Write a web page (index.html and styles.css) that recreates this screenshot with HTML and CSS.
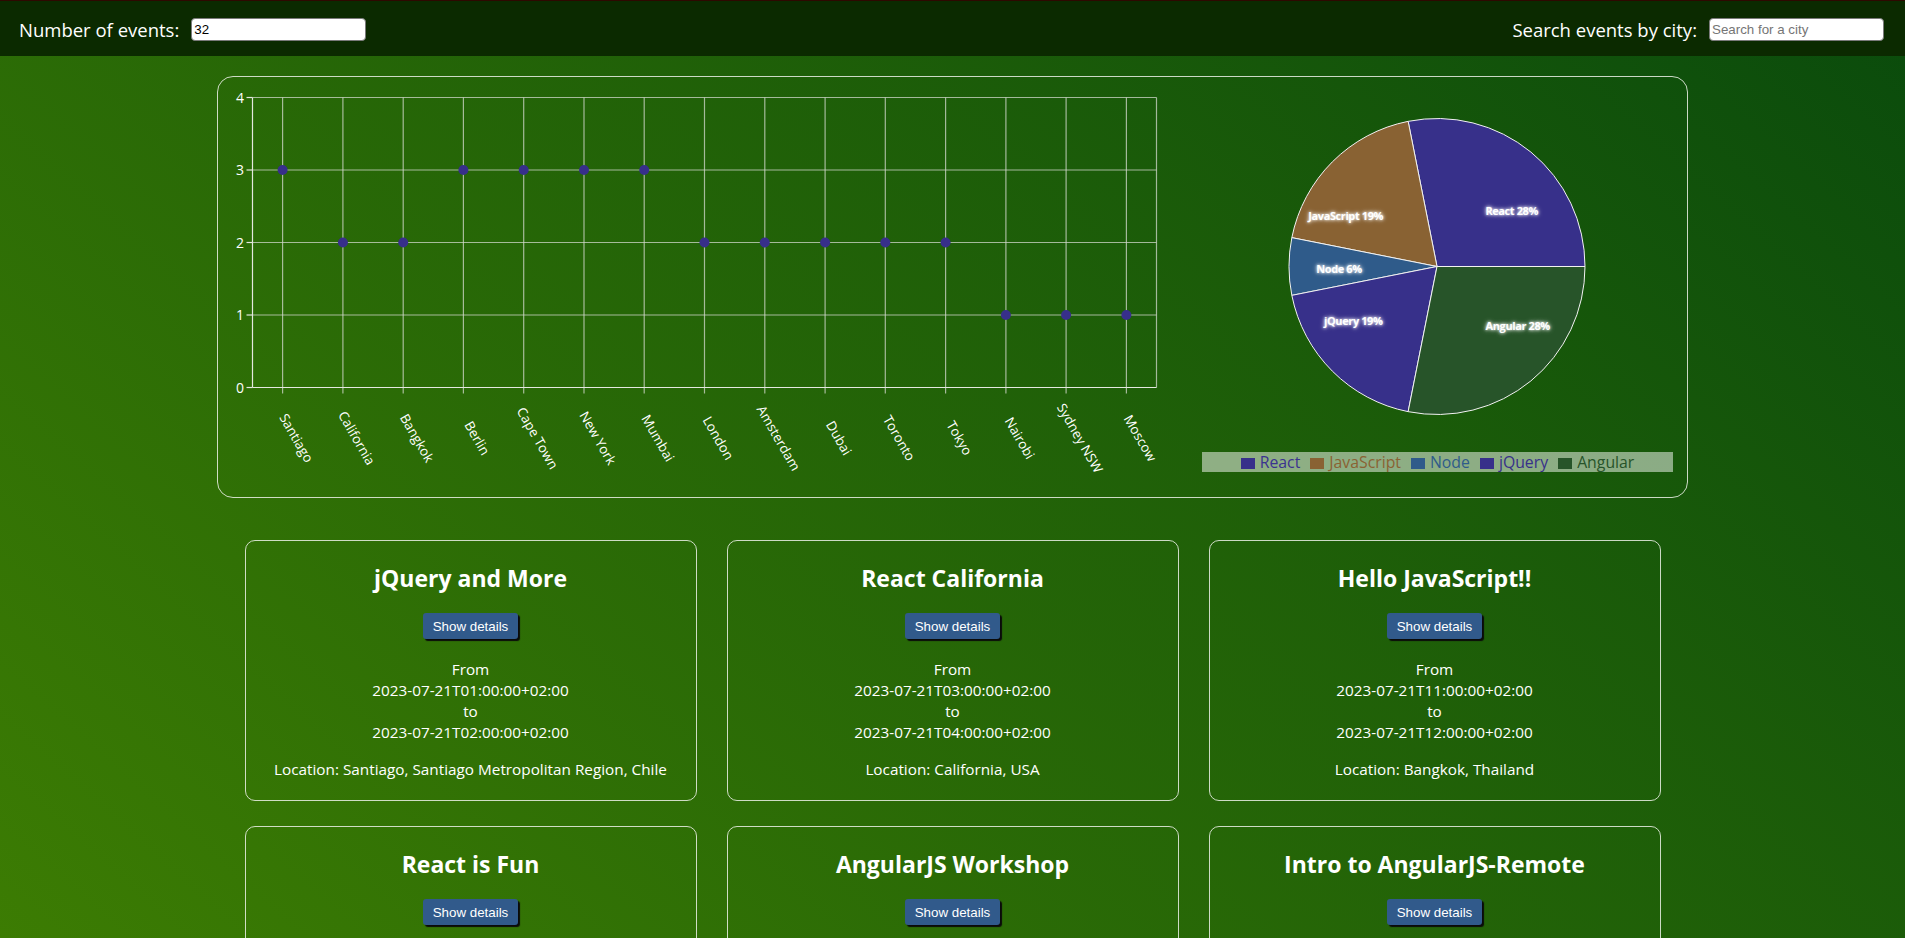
FILE: index.html
```html
<!DOCTYPE html>
<html lang="en">
<head>
<meta charset="utf-8">
<title>Meet App</title>
<link rel="stylesheet" href="styles.css">
</head>
<body>
<header class="topbar">
  <div class="field">
    <label class="field-label" for="num-events">Number of events:</label>
    <input id="num-events" class="text-input" type="text" value="32">
  </div>
  <div class="field">
    <label class="field-label" for="city-search">Search events by city:</label>
    <input id="city-search" class="text-input" type="text" placeholder="Search for a city">
  </div>
</header>

<main class="content">
  <section class="charts">
    <svg class="scatter" width="970" height="420" viewBox="0 0 970 420">
      <g class="grid">
        <line x1="34.5" y1="20.5" x2="938.5" y2="20.5"/>
        <line x1="34.5" y1="93" x2="938.5" y2="93"/>
        <line x1="34.5" y1="165.5" x2="938.5" y2="165.5"/>
        <line x1="34.5" y1="238" x2="938.5" y2="238"/>
        <line x1="938.5" y1="20.5" x2="938.5" y2="310.5"/>
        <line x1="64.6" y1="20.5" x2="64.6" y2="316.5"/>
        <line x1="124.9" y1="20.5" x2="124.9" y2="316.5"/>
        <line x1="185.2" y1="20.5" x2="185.2" y2="316.5"/>
        <line x1="245.4" y1="20.5" x2="245.4" y2="316.5"/>
        <line x1="305.7" y1="20.5" x2="305.7" y2="316.5"/>
        <line x1="366" y1="20.5" x2="366" y2="316.5"/>
        <line x1="426.2" y1="20.5" x2="426.2" y2="316.5"/>
        <line x1="486.5" y1="20.5" x2="486.5" y2="316.5"/>
        <line x1="546.8" y1="20.5" x2="546.8" y2="316.5"/>
        <line x1="607.1" y1="20.5" x2="607.1" y2="316.5"/>
        <line x1="667.3" y1="20.5" x2="667.3" y2="316.5"/>
        <line x1="727.6" y1="20.5" x2="727.6" y2="316.5"/>
        <line x1="787.9" y1="20.5" x2="787.9" y2="316.5"/>
        <line x1="848.1" y1="20.5" x2="848.1" y2="316.5"/>
        <line x1="908.4" y1="20.5" x2="908.4" y2="316.5"/>
      </g>
      <g class="axis">
        <line x1="34.5" y1="20.5" x2="34.5" y2="310.5"/>
        <line x1="34.5" y1="310.5" x2="938.5" y2="310.5"/>
        <line x1="28.5" y1="20.5" x2="34.5" y2="20.5"/>
        <line x1="28.5" y1="93" x2="34.5" y2="93"/>
        <line x1="28.5" y1="165.5" x2="34.5" y2="165.5"/>
        <line x1="28.5" y1="238" x2="34.5" y2="238"/>
        <line x1="28.5" y1="310.5" x2="34.5" y2="310.5"/>
      </g>
      <g class="y-labels">
        <text x="26" y="25.5">4</text>
        <text x="26" y="98">3</text>
        <text x="26" y="170.5">2</text>
        <text x="26" y="243">1</text>
        <text x="26" y="315.5">0</text>
      </g>
      <g class="x-labels">
        <text x="78.6" y="361" transform="rotate(60 78.6 361)">Santiago</text>
        <text x="138.9" y="361" transform="rotate(60 138.9 361)">California</text>
        <text x="199.2" y="361" transform="rotate(60 199.2 361)">Bangkok</text>
        <text x="259.4" y="361" transform="rotate(60 259.4 361)">Berlin</text>
        <text x="319.7" y="361" transform="rotate(60 319.7 361)">Cape Town</text>
        <text x="380" y="361" transform="rotate(60 380 361)">New York</text>
        <text x="440.2" y="361" transform="rotate(60 440.2 361)">Mumbai</text>
        <text x="500.5" y="361" transform="rotate(60 500.5 361)">London</text>
        <text x="560.8" y="361" transform="rotate(60 560.8 361)">Amsterdam</text>
        <text x="621.1" y="361" transform="rotate(60 621.1 361)">Dubai</text>
        <text x="681.3" y="361" transform="rotate(60 681.3 361)">Toronto</text>
        <text x="741.6" y="361" transform="rotate(60 741.6 361)">Tokyo</text>
        <text x="801.9" y="361" transform="rotate(60 801.9 361)">Nairobi</text>
        <text x="862.1" y="361" transform="rotate(60 862.1 361)">Sydney NSW</text>
        <text x="922.4" y="361" transform="rotate(60 922.4 361)">Moscow</text>
      </g>
      <g class="dots">
        <circle cx="64.6" cy="93" r="5"/>
        <circle cx="124.9" cy="165.5" r="5"/>
        <circle cx="185.2" cy="165.5" r="5"/>
        <circle cx="245.4" cy="93" r="5"/>
        <circle cx="305.7" cy="93" r="5"/>
        <circle cx="366" cy="93" r="5"/>
        <circle cx="426.2" cy="93" r="5"/>
        <circle cx="486.5" cy="165.5" r="5"/>
        <circle cx="546.8" cy="165.5" r="5"/>
        <circle cx="607.1" cy="165.5" r="5"/>
        <circle cx="667.3" cy="165.5" r="5"/>
        <circle cx="727.6" cy="165.5" r="5"/>
        <circle cx="787.9" cy="238" r="5"/>
        <circle cx="848.1" cy="238" r="5"/>
        <circle cx="908.4" cy="238" r="5"/>
      </g>
    </svg>

    <div class="pie-panel">
      <svg class="pie" width="499" height="375" viewBox="0 0 499 375">
        <path class="slice slice-react" d="M249,189.5 L397,189.5 A148,148 0 0 0 220.13,44.34 Z"/>
        <path class="slice slice-js" d="M249,189.5 L220.13,44.34 A148,148 0 0 0 103.84,160.63 Z"/>
        <path class="slice slice-node" d="M249,189.5 L103.84,160.63 A148,148 0 0 0 103.84,218.37 Z"/>
        <path class="slice slice-jquery" d="M249,189.5 L103.84,218.37 A148,148 0 0 0 220.13,334.66 Z"/>
        <path class="slice slice-angular" d="M249,189.5 L220.13,334.66 A148,148 0 0 0 397,189.5 Z"/>
        <text class="pie-label" x="323.7" y="133">React 28%</text>
        <text class="pie-label" x="157.7" y="138.7">JavaScript 19%</text>
        <text class="pie-label" x="151" y="191.3">Node 6%</text>
        <text class="pie-label" x="165.3" y="243.7">jQuery 19%</text>
        <text class="pie-label" x="329.7" y="248.3">Angular 28%</text>
      </svg>
      <ul class="legend">
        <li class="legend-item legend-react"><span class="swatch"></span>React</li>
        <li class="legend-item legend-js"><span class="swatch"></span>JavaScript</li>
        <li class="legend-item legend-node"><span class="swatch"></span>Node</li>
        <li class="legend-item legend-jquery"><span class="swatch"></span>jQuery</li>
        <li class="legend-item legend-angular"><span class="swatch"></span>Angular</li>
      </ul>
    </div>
  </section>

  <ul class="events">
    <li class="event">
      <h2 class="event-title">jQuery and More</h2>
      <button class="details-btn" type="button">Show details</button>
      <p class="event-time">From<br>2023-07-21T01:00:00+02:00<br>to<br>2023-07-21T02:00:00+02:00</p>
      <p class="event-location">Location: Santiago, Santiago Metropolitan Region, Chile</p>
    </li>
    <li class="event">
      <h2 class="event-title">React California</h2>
      <button class="details-btn" type="button">Show details</button>
      <p class="event-time">From<br>2023-07-21T03:00:00+02:00<br>to<br>2023-07-21T04:00:00+02:00</p>
      <p class="event-location">Location: California, USA</p>
    </li>
    <li class="event">
      <h2 class="event-title">Hello JavaScript!!</h2>
      <button class="details-btn" type="button">Show details</button>
      <p class="event-time">From<br>2023-07-21T11:00:00+02:00<br>to<br>2023-07-21T12:00:00+02:00</p>
      <p class="event-location">Location: Bangkok, Thailand</p>
    </li>
    <li class="event">
      <h2 class="event-title">React is Fun</h2>
      <button class="details-btn" type="button">Show details</button>
      <p class="event-time">From<br>2023-07-21T14:00:00+02:00<br>to<br>2023-07-21T15:00:00+02:00</p>
      <p class="event-location">Location: Berlin, Germany</p>
    </li>
    <li class="event">
      <h2 class="event-title">AngularJS Workshop</h2>
      <button class="details-btn" type="button">Show details</button>
      <p class="event-time">From<br>2023-07-21T16:00:00+02:00<br>to<br>2023-07-21T17:00:00+02:00</p>
      <p class="event-location">Location: Cape Town, South Africa</p>
    </li>
    <li class="event">
      <h2 class="event-title">Intro to AngularJS-Remote</h2>
      <button class="details-btn" type="button">Show details</button>
      <p class="event-time">From<br>2023-07-21T18:00:00+02:00<br>to<br>2023-07-21T19:00:00+02:00</p>
      <p class="event-location">Location: New York, NY, USA</p>
    </li>
  </ul>
</main>
</body>
</html>
```

FILE: styles.css
```css
* {
  box-sizing: border-box;
}

html {
  background: #1f6208;
}

body {
  margin: 0;
  min-height: 100vh;
  font-family: "Open Sans", "Noto Sans", sans-serif;
  color: #fff;
  background: linear-gradient(42deg, #3c7c03 0%, #0a4b0c 100%);
  background-attachment: fixed;
}

/* ---------- top bar ---------- */
.topbar {
  height: 56px;
  padding: 2px 21px 0 19px;
  border-top: 1px solid #2e0800;
  background: #0b2a00;
  display: flex;
  justify-content: space-between;
  align-items: center;
}

.field {
  display: flex;
  align-items: center;
  gap: 12px;
}

.field-label {
  font-size: 18.5px;
  color: #fff;
}

.text-input {
  width: 175px;
  height: 23px;
  padding: 1px 2px;
  border: 1px solid #7a7a7a;
  border-radius: 4px;
  background: #fff;
  font-family: "Liberation Sans", Arial, sans-serif;
  font-size: 13.33px;
  color: #000;
}

.text-input::placeholder {
  color: #757575;
}

/* ---------- charts ---------- */
.content {
  padding-bottom: 40px;
}

.charts {
  width: 1471px;
  height: 422px;
  margin: 20px auto 0;
  border: 1px solid rgba(235, 240, 230, 0.85);
  border-radius: 16px;
  display: flex;
}

.scatter {
  flex: none;
  display: block;
}

.grid line {
  stroke: #d2d8cc;
  stroke-opacity: 0.75;
  stroke-width: 1.2;
}

.axis line {
  stroke: #e4e8e0;
  stroke-width: 1.2;
}

.y-labels text {
  font-family: "Open Sans", sans-serif;
  font-size: 14px;
  fill: #fff;
  text-anchor: end;
}

.x-labels text {
  font-family: "Open Sans", sans-serif;
  font-size: 13.3px;
  fill: #fff;
  text-anchor: middle;
  dominant-baseline: central;
}

.dots circle {
  fill: #372f8a;
}

.pie-panel {
  flex: none;
  width: 499px;
}

.pie {
  display: block;
}

.slice {
  stroke: #f2f2f2;
  stroke-width: 1;
}

.slice-react { fill: #37308a; }
.slice-js { fill: #896233; }
.slice-node { fill: #2f5b8a; }
.slice-jquery { fill: #37308a; }
.slice-angular { fill: #275429; }

.pie-label {
  font-family: "Open Sans", sans-serif;
  font-size: 11px;
  font-weight: 700;
  letter-spacing: -0.4px;
  fill: #fff;
  text-anchor: middle;
  dominant-baseline: central;
  text-shadow: 0 0 3px #fff, 0 0 5px rgba(255, 255, 255, 0.8);
}

.legend {
  list-style: none;
  width: 471px;
  height: 20px;
  margin: 0 auto;
  padding: 0;
  background: rgba(255, 255, 255, 0.5);
  display: flex;
  justify-content: center;
  align-items: center;
  gap: 10px;
}

.legend-item {
  display: flex;
  align-items: center;
  gap: 5px;
  font-size: 15.8px;
  line-height: 20px;
}

.swatch {
  width: 14px;
  height: 11px;
  margin-top: 2px;
}

.legend-react { color: #3a3290; }
.legend-react .swatch { background: #37308a; }
.legend-js { color: #8a6233; }
.legend-js .swatch { background: #896233; }
.legend-node { color: #2f5b8a; }
.legend-node .swatch { background: #2f5b8a; }
.legend-jquery { color: #37308a; }
.legend-jquery .swatch { background: #37308a; }
.legend-angular { color: #275429; }
.legend-angular .swatch { background: #275429; }

/* ---------- events ---------- */
.events {
  list-style: none;
  margin: 42px auto 0;
  padding: 0;
  display: grid;
  grid-template-columns: repeat(3, 452px);
  justify-content: center;
  column-gap: 30px;
  row-gap: 25px;
}

.event {
  border: 1px solid rgba(235, 240, 230, 0.85);
  border-radius: 10px;
  padding: 19px 10px 20px;
  text-align: center;
}

.event-title {
  margin: 0;
  font-size: 23px;
  font-weight: 700;
  line-height: 36px;
}

.details-btn {
  margin-top: 17px;
  height: 26px;
  padding: 0 10px;
  border: none;
  border-radius: 3px;
  background: #315a8b;
  color: #fff;
  font-family: "Liberation Sans", Arial, sans-serif;
  font-size: 13.33px;
  box-shadow: 2px 2px 1px #0a0a0a;
}

.event-time {
  margin: 20px 0 0;
  font-size: 15.3px;
  line-height: 21px;
}

.event-location {
  margin: 16px 0 0;
  font-size: 15.3px;
  line-height: 21px;
}
```
